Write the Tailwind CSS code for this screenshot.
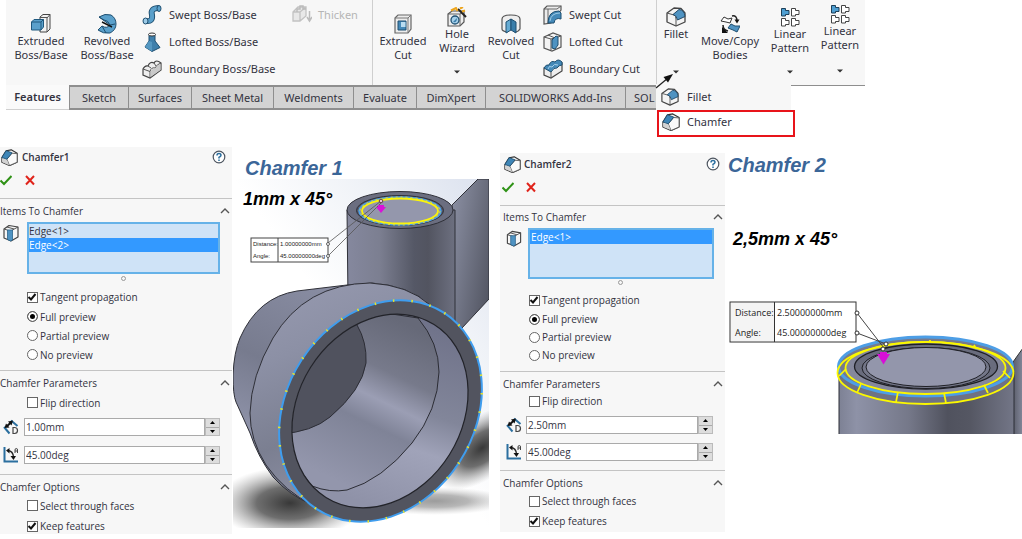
<!DOCTYPE html>
<html lang="en">
<head>
  <meta charset="UTF-8">
  <title>Chamfer feature</title>
  <script src="https://cdn.jsdelivr.net/npm/@tailwindcss/browser@4"></script>
</head>
<body class="bg-white min-h-screen overflow-x-hidden font-['Open_Sans','Noto_Sans',sans-serif] text-[#33333f]">

  <!-- Shared icons -->
  <svg class="hidden" aria-hidden="true">
    <symbol id="i-chamfer" viewBox="0 0 20 20">
      <path d="M1 10 6 2 12 1 19 5V15.500L10 19.500 1 15.500Z" fill="#f4f4f4" stroke="#333" stroke-width="1.300" stroke-linejoin="round"/>
      <path d="M7 12 13 5 19 5.500V15.500L10 19.500Z" fill="#fafafa" stroke="#555" stroke-linejoin="round"/>
      <path d="M1 11 7 12.500 9.500 19 1.500 15.500Z" fill="#d2d2d2"/>
      <path d="M1 10 6 2 13 4.500 7 12Z" fill="#3f86b7" stroke="#1f4f70" stroke-linejoin="round"/>
    </symbol>
    <symbol id="i-fillet" viewBox="0 0 20 20">
      <path d="M1 6 8 1 15 1.500 19 6V15L10 19 1 15Z" fill="#f4f4f4" stroke="#444" stroke-width="1.300" stroke-linejoin="round"/>
      <path d="M1 6 8 8Q10 9 10 12V19" fill="none" stroke="#555"/>
      <path d="M7 7.500 13 2.500Q18.500 3 19 9.500L11.500 13Q11 8.500 7 7.500Z" fill="#4f93c2" stroke="#234a68" stroke-linejoin="round"/>
    </symbol>
    <symbol id="i-edge" viewBox="0 0 16 18">
      <path d="M1 5 6 1.500 15 3V13L8 17 1 14Z" fill="#f6f6f6" stroke="#444" stroke-width="1.200" stroke-linejoin="round"/>
      <path d="M1 5 7.500 7 15 3M4 3l7 2" fill="none" stroke="#555"/>
      <path d="M4.500 6 9.500 6V16L7.500 17 4.500 15.500Z" fill="#4f93c2" stroke="#2a648d" stroke-width=".8"/>
    </symbol>
    <symbol id="i-distance" viewBox="0 0 16 16">
      <path d="M1 8 6.500 14.500M8 1.500l6.500 5.500" stroke="#2b6f9f" stroke-width="2" fill="none"/>
      <path d="M3.500 7.500 8 3.500" stroke="#111" stroke-width="2"/>
      <path d="M1.500 9 3 4.500 6.500 8.500ZM10 1.500 8.500 6.500 5 2.500Z" fill="#111"/>
      <path d="M10 8.500h1.500q3 0 3 3t-3 3H10Z" fill="none" stroke="#444" stroke-width="1.200"/>
    </symbol>
    <symbol id="i-angle" viewBox="0 0 16 16">
      <path d="M1.500 0V14.500H15" stroke="#2b6f9f" stroke-width="2" fill="none"/>
      <path d="M5 3.500Q10 4 10.500 10" stroke="#222" stroke-width="1.300" fill="none"/>
      <path d="M3 3.500 6.500 1V6.500ZM10.500 13 7.500 9H13Z" fill="#111"/>
      <path d="M12 6V3q0-1.500 1.300-1.500T14.500 3v3M12 4h2.500" stroke="#444" fill="none"/>
    </symbol>
    <symbol id="i-help" viewBox="0 0 14 14">
      <circle cx="7" cy="7" r="5.800" fill="#fff" stroke="#4d5560" stroke-width="1.200"/>
      <path d="M5 5.500Q5 3.500 7 3.500T9 5.300Q9 6.300 7 7.300V8.500M7 9.500V11" fill="none" stroke="#2b6f9f" stroke-width="1.500"/>
    </symbol>
    <symbol id="i-ok" viewBox="0 0 12 12"><path d="M.5 6.500 4 10 11.500 2" fill="none" stroke="#2f9216" stroke-width="2"/></symbol>
    <symbol id="i-cancel" viewBox="0 0 12 12"><path d="M2 2l8 8.500M10 2 2 10.500" fill="none" stroke="#e0241b" stroke-width="2"/></symbol>
    <symbol id="i-up" viewBox="0 0 10 6"><path d="M1 5 5 1 9 5" fill="none" stroke="#555" stroke-width="1.400"/></symbol>
    <symbol id="i-check" viewBox="0 0 10 10"><path d="M1.500 5 4 7.500 8.500 2" fill="none" stroke="#111" stroke-width="2"/></symbol>
    <symbol id="i-pattern" viewBox="0 0 20 20">
      <path d="M1.500 1.500H5.500V3.500H9V7.500H5.500V9H1.500Z" fill="#4f9fd2" stroke="#1c3f58"/>
      <path d="M11.500 1.500h4v2h3.500V7.500H15.500V9H11.500ZM1.500 11.500h4v2H9V17.500H5.500V19h-4ZM11.500 11.500h4v2h3.500V17.500H15.500V19H11.500Z" fill="#fff" stroke="#444"/>
    </symbol>
  </svg>

  <!-- Command ribbon -->
  <header class="relative mx-[6px] h-[109px] max-w-[859px] font-['Noto_Sans',sans-serif] text-[11px] leading-[14px]">
    <div class="flex h-[85px] bg-[#f7f7f7]">
      <div class="flex pl-[2px] shrink-0">
        <button class="flex w-[66px] flex-col items-center pt-[14px]">
          <svg class="size-5" viewBox="0 0 20 20"><path d="M9 3 12 .5H19V15L16 18H9Z" fill="#f2f2f2" stroke="#444"/><path d="M16 4 19 .5M9 3.500H16V18" fill="none" stroke="#555"/><path d="M.5 8 3 5.500H12.500V13L10 16H.5Z" fill="#5aa0cb" stroke="#1f587e"/><path d="M.5 8H10V16M10 8l2.500-2.500" fill="none" stroke="#1f587e"/></svg>
          Extruded<br>Boss/Base
        </button>
        <button class="flex w-[66px] flex-col items-center pt-[14px]">
          <svg class="size-5" viewBox="0 0 20 20"><path d="M2 3Q8-1 14 1q5 3 5 9t-6 9Q6 20 1 16L5 12q5 3 8-1Z" fill="#5aa0cb" stroke="#1f4f70"/><path d="M2 3 7 6q4 0 6 5l5-1M5 12l4 7" fill="none" stroke="#1f4f70"/><path d="M5 8 15 13" stroke="#111" stroke-width="1.500"/></svg>
          Revolved<br>Boss/Base
        </button>
        <div class="ml-[2px] flex w-[150px] flex-col pt-[1px]">
          <button class="flex h-[27px] items-center gap-[7px]">
            <svg class="size-5" viewBox="0 0 20 20"><path d="M4 16Q11 17 10 10 8 3 17 3" fill="none" stroke="#1f4f70" stroke-width="6"/><path d="M4 16Q11 17 10 10 8 3 17 3" fill="none" stroke="#5aa0cb" stroke-width="4"/><ellipse cx="3.500" cy="16" rx="2.500" ry="3" fill="#9ccae6" stroke="#1f4f70"/><ellipse cx="17" cy="3.500" rx="2" ry="3" fill="#5aa0cb" stroke="#1f4f70"/></svg>
            Swept Boss/Base
          </button>
          <button class="flex h-[27px] items-center gap-[7px]">
            <svg class="size-5" viewBox="0 0 20 20"><path d="M7 3V9L3 15 10 19.500 18 15.500 13 9V3Z" fill="#3f80ac" stroke="#1f4f70"/><path d="M10 10V19.500L3 15 7 9Z" fill="#5598c2"/><ellipse cx="10" cy="2.500" rx="3.500" ry="1.500" fill="#fff" stroke="#333"/></svg>
            Lofted Boss/Base
          </button>
          <button class="flex h-[27px] items-center gap-[7px]">
            <svg class="size-5" viewBox="0 0 20 20"><path d="M1 10Q3 6 6 7 8 2 12 4 14 0 19 4V11L8 19 1 16Z" fill="#eee" stroke="#444" stroke-width="1.200"/><path d="M1 10 8 12.500Q9 8 13 9 15 5 19 4M8 12.500V19M6 7l3 2M12 4l2 3" fill="none" stroke="#555"/><path d="M8.500 13Q10 9 13 9.500 15 6 18.500 5V11L8.500 18Z" fill="#c9c9c9"/></svg>
            Boundary Boss/Base
          </button>
        </div>
        <button class="mt-[1px] flex h-[27px] w-[80px] items-center gap-[6px] text-[#b5b5b5]" disabled>
          <svg class="size-5" viewBox="0 0 20 20"><path d="M1 7 6 2H14V11L8 16H1ZM1 7H8V16M8 7l6-5" fill="#e8e8e8" stroke="#c2c2c2" stroke-width="1.300"/><path d="M5 7V4H8V1H11V4h3M17.500 6v9M15 12l2.500 4 2.500-4" fill="none" stroke="#bcbcbc" stroke-width="1.500"/></svg>
          Thicken
        </button>
      </div>
      <div class="flex shrink-0 border-l border-[#cfcfcf] pl-[3px]">
        <button class="flex w-[54px] flex-col items-center pt-[14px]">
          <svg class="size-5" viewBox="0 0 20 20"><path d="M2 4 5 1H18V15L15 19H2Z" fill="#ececec" stroke="#666" stroke-width="1.200"/><path d="M2 4H15V19M15 4l3-3" fill="none" stroke="#777"/><path d="M5 7H13V16H5Z" fill="#4489b8" stroke="#1f4f70"/><path d="M8 8V13H12.500V8Z" fill="#b9dcf0"/></svg>
          Extruded<br>Cut
        </button>
        <button class="flex w-[54px] flex-col items-center pt-[7px]">
          <svg class="size-5" viewBox="0 0 20 20"><path d="M1 7 5 4H17V15L13 19H1Z" fill="#eee" stroke="#555" stroke-width="1.200"/><path d="M1 7H13V19M13 7l4-3" fill="none" stroke="#666"/><circle cx="8" cy="13" r="4" fill="#a6d0ea" stroke="#1f4f70" stroke-width="1.300"/><path d="M6 15q4 1 4-4Z" fill="#3a7eaa"/><path d="M11 2 19 10" stroke="#222" stroke-width="2"/><path d="M4 3.500 9 1l1.500 3M13 1.500l3-1.500M15 4.500l3-1" stroke="#eda51c" stroke-width="2" fill="none"/></svg>
          <span>Hole<br>Wizard</span>
          <svg class="mt-[15px] h-[4px] w-[6px]" viewBox="0 0 6 4"><path d="M0 .5H6L3 3.500Z" fill="#333"/></svg>
        </button>
        <button class="flex w-[54px] flex-col items-center pt-[14px]">
          <svg class="size-5" viewBox="0 0 20 20"><path d="M1 5Q1 1 10 1t9 4V15q-2 3-5 3V9L10 6 6 9v9Q1 17 1 15Z" fill="#eee" stroke="#555" stroke-width="1.200"/><path d="M5 8 10 5V16L5 19Z" fill="#65abd3" stroke="#1f4f70"/><path d="M10 5 15 8V19L10 16Z" fill="#3a7eaa" stroke="#1f4f70"/></svg>
          Revolved<br>Cut
        </button>
        <div class="ml-[5px] flex w-[113px] flex-col pt-[1px]">
          <button class="flex h-[27px] items-center gap-[6px]">
            <svg class="size-5" viewBox="0 0 20 20"><path d="M1 4 4 1H18V5L8 18 1 19Z" fill="#ececec" stroke="#555" stroke-width="1.200"/><path d="M1 4H14L18 1M5 4V18" fill="none" stroke="#666"/><path d="M5 18Q5 6 16 6L18 8V14Q12 12 11 18Z" fill="#4489b8" stroke="#1f4f70"/><path d="M7 16Q8 8 17 8" fill="none" stroke="#9ccae6"/></svg>
            Swept Cut
          </button>
          <button class="flex h-[27px] items-center gap-[6px]">
            <svg class="size-5" viewBox="0 0 20 20"><path d="M1 5 10 1 18 4V15L9 19 1 16Z" fill="#f3f3f3" stroke="#555" stroke-width="1.200"/><path d="M1 5 8 7V18M8 7 18 4M5 3l7 3" fill="none" stroke="#555"/><path d="M9 8 13 4 15 5V13L12 17 9 16Z" fill="#4f93c2" stroke="#1f4f70"/></svg>
            Lofted Cut
          </button>
          <button class="flex h-[27px] items-center gap-[6px]">
            <svg class="size-5" viewBox="0 0 20 20"><path d="M1 9 19 4V12L8 19 1 16Z" fill="#eee" stroke="#444" stroke-width="1.200"/><path d="M1 9Q3 5 6 6 8 1 12 3 15-1 19 3V6Q16 6 14 9 11 8 8 13Z" fill="#4489b8" stroke="#1f4f70"/><path d="M5 10Q6 6 9 8 11 4 15 6" fill="none" stroke="#a6d0ea"/><path d="M8 13v6" stroke="#555"/></svg>
            Boundary Cut
          </button>
        </div>
      </div>
      <div class="flex border-l border-[#cfcfcf]">
        <button class="flex w-[38px] flex-col items-center pt-[7px]">
          <svg class="size-5"><use href="#i-fillet"/></svg>
          Fillet
          <svg class="mt-[29px] h-[4px] w-[6px]" viewBox="0 0 6 4"><path d="M0 .5H6L3 3.500Z" fill="#333"/></svg>
        </button>
        <button class="flex w-[70px] flex-col items-center pt-[14px]">
          <svg class="size-5" viewBox="0 0 20 20"><path d="M1 7 4 3 8 5 12 4 10 9 6 8Z" fill="#fff" stroke="#333"/><path d="M8 14 11 10l4 2 5 0-3 6-4-2Z" fill="#4f93c2" stroke="#1f4f70"/><path d="M12 2Q17 1 17 7M3 11q0 5 5 6" stroke="#222" stroke-width="1.500" fill="none"/><path d="M14.500 5.500H19.500L17 9.500ZM2 13v6h6Z" fill="#111"/></svg>
          Move/Copy<br>Bodies
        </button>
        <button class="flex w-[50px] flex-col items-center pt-[7px]">
          <svg class="size-5"><use href="#i-pattern"/></svg>
          <span>Linear<br>Pattern</span>
          <svg class="mt-[15px] h-[4px] w-[6px]" viewBox="0 0 6 4"><path d="M0 .5H6L3 3.500Z" fill="#333"/></svg>
        </button>
        <button class="flex w-[50px] flex-col items-center pt-[4px]">
          <svg class="size-5"><use href="#i-pattern"/></svg>
          <span>Linear<br>Pattern</span>
          <svg class="mt-[17px] h-[4px] w-[6px]" viewBox="0 0 6 4"><path d="M0 .5H6L3 3.500Z" fill="#333"/></svg>
        </button>
      </div>
    </div>

    <nav class="flex h-[25px]">
      <a href="#" class="flex w-[63px] shrink-0 items-center justify-center bg-[#fafafa] border-b border-[#d0d0d0] font-semibold">Features</a>
      <div class="flex w-[588px] shrink-0 overflow-hidden border-y-2 border-l border-[#8e8e8e] bg-[#d3d3d3]">
        <a href="#" class="flex w-[59px] shrink-0 items-center justify-center border-r border-[#8e8e8e]">Sketch</a>
        <a href="#" class="flex w-[63px] shrink-0 items-center justify-center border-r border-[#8e8e8e]">Surfaces</a>
        <a href="#" class="flex w-[82px] shrink-0 items-center justify-center border-r border-[#8e8e8e]">Sheet Metal</a>
        <a href="#" class="flex w-[80px] shrink-0 items-center justify-center border-r border-[#8e8e8e]">Weldments</a>
        <a href="#" class="flex w-[63px] shrink-0 items-center justify-center border-r border-[#8e8e8e]">Evaluate</a>
        <a href="#" class="flex w-[69px] shrink-0 items-center justify-center border-r border-[#8e8e8e]">DimXpert</a>
        <a href="#" class="flex w-[140px] shrink-0 items-center justify-center border-r border-[#8e8e8e]">SOLIDWORKS Add-Ins</a>
        <span class="flex shrink-0 items-center pl-[8px]">SOL</span>
      </div>
      <div class="flex-1 border-t border-[#8e8e8e]"></div>
    </nav>

    <!-- Fillet flyout -->
    <div class="absolute left-[650px] top-[84px] w-[139px]">
      <button class="flex h-[26px] w-[135px] items-center gap-[8px] bg-[#f7f7f7] pl-[5px]">
        <svg class="size-[18px]"><use href="#i-fillet"/></svg>Fillet
      </button>
      <button class="ml-[1px] flex h-[27px] w-[138px] items-center gap-[7px] border-2 border-[#e8141a] bg-white pb-[3px] pl-[3px]">
        <svg class="size-[18px]"><use href="#i-chamfer"/></svg>Chamfer
      </button>
    </div>
    <svg class="absolute left-[649px] top-[72px] h-[17px] w-[20px]" viewBox="0 0 20 17"><path d="M1 16 13 6" stroke="#222" stroke-width="1.300"/><path d="M18 2 8.500 5 13 10.500Z" fill="#111"/></svg>
  </header>

  <main class="mt-[38px] grid grid-cols-[232fr_257fr_11fr_225fr_297fr] items-start text-[10px] leading-[14px]">

    <!-- Chamfer1 property manager -->
    <form class="bg-[#f7f7f7]">
      <div class="flex h-[20px] items-center pl-[1px] pr-[6px] text-[10px] font-semibold">
        <svg class="mr-[4px] size-[17px]"><use href="#i-chamfer"/></svg>Chamfer1
        <button type="button" class="ml-auto" aria-label="Help"><svg class="size-[14px]"><use href="#i-help"/></svg></button>
      </div>
      <div class="mb-[5px] flex h-[26px] items-center gap-[12px]">
        <button type="button" aria-label="OK"><svg class="size-[12px]"><use href="#i-ok"/></svg></button>
        <button type="button" aria-label="Cancel"><svg class="size-[12px]"><use href="#i-cancel"/></svg></button>
      </div>

      <section class="border-t border-[#c4c4c4] pb-[6px]">
        <h3 class="flex h-[23px] items-center justify-between pr-[2px] font-medium">Items To Chamfer <svg class="h-[6px] w-[10px]"><use href="#i-up"/></svg></h3>
        <div class="flex items-start pl-[3px] pr-[12px]">
          <svg class="mr-[8px] mt-[2px] h-[18px] w-[16px]"><use href="#i-edge"/></svg>
          <ul role="listbox" aria-label="Items To Chamfer" class="h-[52px] flex-1 border-2 border-[#66b2e8] bg-[#cfe3f7]">
            <li role="option" class="h-[14px]">Edge&lt;1&gt;</li>
            <li role="option" aria-selected="true" class="h-[14px] bg-[#3399ff] text-white">Edge&lt;2&gt;</li>
          </ul>
        </div>
        <div class="flex h-[13px] justify-center pl-[14px] pt-[2px]"><span class="size-[5px] rounded-full border border-[#999]"></span></div>
        <label class="relative ml-[27px] flex h-[20px] items-center gap-[2px]"><input type="checkbox" checked class="peer size-[11px] appearance-none border border-[#666] bg-white"><svg class="pointer-events-none absolute left-0 top-[5px] hidden size-[10px] peer-checked:block"><use href="#i-check"/></svg>Tangent propagation</label>
        <label class="ml-[27px] flex h-[19px] items-center gap-[2px]"><input type="radio" name="preview1" checked class="size-[11px] appearance-none rounded-full border border-[#666] bg-white checked:bg-black checked:shadow-[inset_0_0_0_2px_white]">Full preview</label>
        <label class="ml-[27px] flex h-[19px] items-center gap-[2px]"><input type="radio" name="preview1" class="size-[11px] appearance-none rounded-full border border-[#666] bg-white">Partial preview</label>
        <label class="ml-[27px] flex h-[19px] items-center gap-[2px]"><input type="radio" name="preview1" class="size-[11px] appearance-none rounded-full border border-[#666] bg-white">No preview</label>
      </section>

      <section class="border-t border-[#c4c4c4] pb-[10px]">
        <h3 class="flex h-[24px] items-center justify-between pr-[2px] font-medium">Chamfer Parameters <svg class="h-[6px] w-[10px]"><use href="#i-up"/></svg></h3>
        <label class="mb-[8px] ml-[27px] flex h-[15px] items-center gap-[2px]"><input type="checkbox" class="size-[11px] appearance-none border border-[#666] bg-white">Flip direction</label>
        <div class="mb-[10px] flex h-[18px] items-center pl-[3px] pr-[12px]">
          <svg class="mr-[5px] size-[16px]"><use href="#i-distance"/></svg>
          <input type="text" aria-label="Distance" value="1.00mm" class="h-[18px] min-w-0 flex-1 border border-[#aaa] bg-white px-[1px]">
          <span class="flex h-[18px] w-[15px] flex-col border border-[#bbb] bg-[#ddd]">
            <button type="button" aria-label="Increase" class="flex flex-1 items-center justify-center border-b border-[#aaa]"><svg class="h-[3px] w-[5px]" viewBox="0 0 5 3"><path d="M0 3 2.500 0 5 3Z"/></svg></button>
            <button type="button" aria-label="Decrease" class="flex flex-1 items-center justify-center"><svg class="h-[3px] w-[5px]" viewBox="0 0 5 3"><path d="M0 0H5L2.500 3Z"/></svg></button>
          </span>
        </div>
        <div class="flex h-[18px] items-center pl-[3px] pr-[12px]">
          <svg class="mr-[5px] size-[16px]"><use href="#i-angle"/></svg>
          <input type="text" aria-label="Angle" value="45.00deg" class="h-[18px] min-w-0 flex-1 border border-[#aaa] bg-white px-[1px]">
          <span class="flex h-[18px] w-[15px] flex-col border border-[#bbb] bg-[#ddd]">
            <button type="button" aria-label="Increase" class="flex flex-1 items-center justify-center border-b border-[#aaa]"><svg class="h-[3px] w-[5px]" viewBox="0 0 5 3"><path d="M0 3 2.500 0 5 3Z"/></svg></button>
            <button type="button" aria-label="Decrease" class="flex flex-1 items-center justify-center"><svg class="h-[3px] w-[5px]" viewBox="0 0 5 3"><path d="M0 0H5L2.500 3Z"/></svg></button>
          </span>
        </div>
      </section>

      <section class="border-t border-[#c4c4c4]">
        <h3 class="flex h-[24px] items-center justify-between pr-[2px] font-medium">Chamfer Options <svg class="h-[6px] w-[10px]"><use href="#i-up"/></svg></h3>
        <label class="mb-[6px] ml-[27px] flex h-[13px] items-center gap-[2px]"><input type="checkbox" class="size-[11px] appearance-none border border-[#666] bg-white">Select through faces</label>
        <label class="relative ml-[27px] flex h-[16px] items-center gap-[2px]"><input type="checkbox" checked class="peer size-[11px] appearance-none border border-[#666] bg-white"><svg class="pointer-events-none absolute left-0 top-[3px] hidden size-[10px] peer-checked:block"><use href="#i-check"/></svg>Keep features</label>
      </section>
    </form>

    <!-- Model view, 1 mm chamfer -->
    <figure class="relative pl-[1px]">
      <h2 class="h-[32px] pl-[12px] pt-[7px] font-['Liberation_Sans',sans-serif] text-[20px] font-bold italic leading-[28px] text-[#3b6698]">Chamfer 1</h2>
      <figcaption class="absolute left-[11px] top-[41px] font-['Liberation_Sans',sans-serif] text-[18px] font-bold italic leading-[22px] text-black">1mm x 45°</figcaption>
      <svg class="block w-full" viewBox="233 179 256 349">
        <defs>
          <linearGradient id="sky" x1="0" y1="1" x2="1" y2="0"><stop offset=".5" stop-color="#fff"/><stop offset=".75" stop-color="#eff2f7"/><stop offset="1" stop-color="#dbe1ee"/></linearGradient>
          <radialGradient id="shade"><stop offset="0" stop-color="#383838"/><stop offset=".45" stop-color="#555" stop-opacity=".85"/><stop offset="1" stop-color="#999" stop-opacity="0"/></radialGradient>
          <linearGradient id="tube"><stop offset="0" stop-color="#85889e"/><stop offset=".3" stop-color="#7c7f91"/><stop offset=".62" stop-color="#555866"/><stop offset=".75" stop-color="#525460"/><stop offset="1" stop-color="#6d7080"/></linearGradient>
          <linearGradient id="arm" x1="0" y1="0" x2="1" y2=".7"><stop offset="0" stop-color="#8d91a5"/><stop offset=".4" stop-color="#777b8c"/><stop offset="1" stop-color="#555865"/></linearGradient>
          <linearGradient id="band" x1="0" y1="0" x2=".35" y2="1"><stop offset="0" stop-color="#989bb1"/><stop offset=".35" stop-color="#8c90a5"/><stop offset=".7" stop-color="#7b7f91"/><stop offset="1" stop-color="#8d90a5"/></linearGradient>
          <linearGradient id="back" x1=".6" y1="0" x2=".2" y2="1"><stop offset="0" stop-color="#8b8fa5"/><stop offset=".45" stop-color="#777b8e"/><stop offset=".75" stop-color="#8e92a8"/><stop offset="1" stop-color="#656879"/></linearGradient>
          <linearGradient id="cone" gradientUnits="userSpaceOnUse" x1="410" y1="325" x2="335" y2="480"><stop offset="0" stop-color="#666978"/><stop offset=".3" stop-color="#777a8b"/><stop offset=".47" stop-color="#9b9eb4"/><stop offset=".62" stop-color="#7f8397"/><stop offset="1" stop-color="#9396ac"/></linearGradient>
          <linearGradient id="lip" gradientUnits="userSpaceOnUse" x1="430" y1="325" x2="370" y2="505"><stop offset="0" stop-color="#70738a"/><stop offset=".45" stop-color="#82869a"/><stop offset=".65" stop-color="#a0a3b9"/><stop offset="1" stop-color="#8f92a8"/></linearGradient>
          <clipPath id="bore"><ellipse cx="380" cy="411" rx="102" ry="82" transform="rotate(-58 380 411)"/></clipPath>
        </defs>
        <rect x="233" y="179" width="256" height="349" fill="url(#sky)"/>
        <ellipse cx="290" cy="503" rx="74" ry="36" fill="url(#shade)"/>
        <ellipse cx="482" cy="448" rx="56" ry="30" fill="url(#shade)" transform="rotate(-38 482 448)"/>
        <ellipse cx="435" cy="501" rx="75" ry="14" fill="url(#shade)" opacity=".5"/>
        <g stroke="#2f3038" stroke-width="1" stroke-linejoin="round">
          <path d="M452 205 478 179H489V299L462 328 452 335Z" fill="url(#arm)"/>
          <path d="M347 210 348 300 455 340V210Z" fill="url(#tube)"/>
          <ellipse cx="400" cy="210" rx="53" ry="18.500" fill="#6b6e80"/>
          <ellipse cx="400" cy="210.500" rx="43.500" ry="15" fill="#555867"/>
          <ellipse cx="400" cy="211" rx="41" ry="14" fill="#8f92a7" stroke="#4aa0ea" stroke-width="1.500"/>
        </g>
        <ellipse cx="400" cy="211" rx="38" ry="12.500" fill="#9497ac" stroke="#fbf50a" stroke-width="1.800"/>
        <ellipse cx="400" cy="211" rx="40" ry="14" fill="none" stroke="#e9e52a" stroke-width="1" stroke-dasharray="2 3"/>

        <path d="M313 505Q290 496 273 477 258 457 250 433L236 402Q233 395 233 375 234 352 240 338 258 297 297 291L347 285 372 283Q410 286 430 305Z" fill="url(#back)" stroke="#2f3038"/>
        <path d="M313 505Q285 492 266 465 250 440 250 413 251 376 273 338 305 284 370 283 408 285 430 305Z" fill="url(#band)" stroke="#2f3038"/>
        <ellipse cx="380.500" cy="411" rx="117" ry="94" transform="rotate(-57 380.500 411)" fill="#52545f" stroke="#3f9dee" stroke-width="2"/>
        <ellipse cx="380.500" cy="411" rx="117" ry="94" transform="rotate(-57 380.500 411)" fill="none" stroke="#e7e22b" stroke-width="2.500" stroke-dasharray="1.500 17"/>
        <g clip-path="url(#bore)" stroke="#2c2d35">
          <rect x="280" y="300" width="200" height="220" fill="url(#lip)" stroke="none"/>
          <path d="M418 318Q439 343 439 372 438 410 412 443 382 480 347 490 330 493 312 486L270 430 300 300Z" fill="url(#cone)"/>
          <path d="M357 325Q367 342 366 363 362 390 330 417 312 432 280 434V300H345Z" fill="#50525e"/>
        </g>
        <ellipse cx="380" cy="411" rx="102" ry="82" transform="rotate(-58 380 411)" fill="none" stroke="#222329" stroke-width="1.200"/>

        <g stroke="#555" fill="none" stroke-width=".8"><path d="M328 243 381 201M328 256 381 203"/></g>
        <path d="M378 205H384L384 207H386L381 213 376 207H378Z" fill="#d912d9"/>
        <circle cx="381" cy="201" r="1.800" fill="#e9c4d5" stroke="#644"/>
        <rect x="251" y="238" width="77" height="24" fill="#fff" stroke="#444"/>
        <path d="M278 238V262" stroke="#444"/>
        <g fill="#fff" stroke="#444" stroke-width=".8"><circle cx="328" cy="244" r="1.500"/><circle cx="328" cy="256" r="1.500"/></g>
        <g class="font-['Liberation_Sans',sans-serif] text-[6px]" fill="#222">
          <text x="253" y="246">Distance:</text><text x="280" y="246">1.00000000mm</text>
          <text x="253" y="258">Angle:</text><text x="280" y="258">45.00000000deg</text>
        </g>
      </svg>
    </figure>

    <div></div>

    <!-- Chamfer2 property manager -->
    <form class="mt-[6px] bg-[#f7f7f7]">
      <div class="flex h-[22px] items-center pl-[4px] pr-[5px] text-[10px] font-semibold">
        <svg class="mr-[3px] size-[17px]"><use href="#i-chamfer"/></svg>Chamfer2
        <button type="button" class="ml-auto" aria-label="Help"><svg class="size-[14px]"><use href="#i-help"/></svg></button>
      </div>
      <div class="mb-[6px] flex h-[24px] items-center gap-[11px] pl-[2px]">
        <button type="button" aria-label="OK"><svg class="size-[12px]"><use href="#i-ok"/></svg></button>
        <button type="button" aria-label="Cancel"><svg class="size-[12px]"><use href="#i-cancel"/></svg></button>
      </div>

      <section class="border-t border-[#c4c4c4] pb-[7px]">
        <h3 class="flex h-[22px] items-center justify-between pl-[3px] pr-[2px] font-medium">Items To Chamfer <svg class="h-[6px] w-[10px]"><use href="#i-up"/></svg></h3>
        <div class="flex items-start pl-[6px] pr-[11px]">
          <svg class="mr-[6px] mt-[2px] h-[17px] w-[16px]"><use href="#i-edge"/></svg>
          <ul role="listbox" aria-label="Items To Chamfer" class="h-[51px] flex-1 border-2 border-[#66b2e8] bg-[#cfe3f7]">
            <li role="option" aria-selected="true" class="h-[14px] bg-[#3399ff] pl-[1px] text-white">Edge&lt;1&gt;</li>
          </ul>
        </div>
        <div class="flex h-[11px] justify-center pl-[16px] pt-[1px]"><span class="size-[5px] rounded-full border border-[#999]"></span></div>
        <label class="relative ml-[29px] flex h-[20px] items-center gap-[2px]"><input type="checkbox" checked class="peer size-[11px] appearance-none border border-[#666] bg-white"><svg class="pointer-events-none absolute left-0 top-[5px] hidden size-[10px] peer-checked:block"><use href="#i-check"/></svg>Tangent propagation</label>
        <label class="ml-[29px] flex h-[18px] items-center gap-[2px]"><input type="radio" name="preview2" checked class="size-[11px] appearance-none rounded-full border border-[#666] bg-white checked:bg-black checked:shadow-[inset_0_0_0_2px_white]">Full preview</label>
        <label class="ml-[29px] flex h-[18px] items-center gap-[2px]"><input type="radio" name="preview2" class="size-[11px] appearance-none rounded-full border border-[#666] bg-white">Partial preview</label>
        <label class="ml-[29px] flex h-[18px] items-center gap-[2px]"><input type="radio" name="preview2" class="size-[11px] appearance-none rounded-full border border-[#666] bg-white">No preview</label>
      </section>

      <section class="border-t border-[#c4c4c4] pb-[9px]">
        <h3 class="flex h-[23px] items-center justify-between pl-[3px] pr-[2px] font-medium">Chamfer Parameters <svg class="h-[6px] w-[10px]"><use href="#i-up"/></svg></h3>
        <label class="mb-[9px] ml-[29px] flex h-[12px] items-center gap-[2px]"><input type="checkbox" class="size-[11px] appearance-none border border-[#666] bg-white">Flip direction</label>
        <div class="mb-[9px] flex h-[18px] items-center pl-[6px] pr-[12px]">
          <svg class="mr-[4px] size-[16px]"><use href="#i-distance"/></svg>
          <input type="text" aria-label="Distance" value="2.50mm" class="h-[18px] min-w-0 flex-1 border border-[#aaa] bg-white px-[1px]">
          <span class="flex h-[18px] w-[15px] flex-col border border-[#bbb] bg-[#ddd]">
            <button type="button" aria-label="Increase" class="flex flex-1 items-center justify-center border-b border-[#aaa]"><svg class="h-[3px] w-[5px]" viewBox="0 0 5 3"><path d="M0 3 2.500 0 5 3Z"/></svg></button>
            <button type="button" aria-label="Decrease" class="flex flex-1 items-center justify-center"><svg class="h-[3px] w-[5px]" viewBox="0 0 5 3"><path d="M0 0H5L2.500 3Z"/></svg></button>
          </span>
        </div>
        <div class="flex h-[18px] items-center pl-[6px] pr-[12px]">
          <svg class="mr-[4px] size-[16px]"><use href="#i-angle"/></svg>
          <input type="text" aria-label="Angle" value="45.00deg" class="h-[18px] min-w-0 flex-1 border border-[#aaa] bg-white px-[1px]">
          <span class="flex h-[18px] w-[15px] flex-col border border-[#bbb] bg-[#ddd]">
            <button type="button" aria-label="Increase" class="flex flex-1 items-center justify-center border-b border-[#aaa]"><svg class="h-[3px] w-[5px]" viewBox="0 0 5 3"><path d="M0 3 2.500 0 5 3Z"/></svg></button>
            <button type="button" aria-label="Decrease" class="flex flex-1 items-center justify-center"><svg class="h-[3px] w-[5px]" viewBox="0 0 5 3"><path d="M0 0H5L2.500 3Z"/></svg></button>
          </span>
        </div>
      </section>

      <section class="border-t border-[#c4c4c4] pb-[3px]">
        <h3 class="flex h-[24px] items-center justify-between pl-[3px] pr-[2px] font-medium">Chamfer Options <svg class="h-[6px] w-[10px]"><use href="#i-up"/></svg></h3>
        <label class="mb-[6px] ml-[29px] flex h-[12px] items-center gap-[2px]"><input type="checkbox" class="size-[11px] appearance-none border border-[#666] bg-white">Select through faces</label>
        <label class="relative ml-[29px] flex h-[16px] items-center gap-[2px]"><input type="checkbox" checked class="peer size-[11px] appearance-none border border-[#666] bg-white"><svg class="pointer-events-none absolute left-0 top-[3px] hidden size-[10px] peer-checked:block"><use href="#i-check"/></svg>Keep features</label>
      </section>
    </form>

    <!-- Model view, 2.5 mm chamfer -->
    <figure>
      <h2 class="pl-[3px] pt-[4px] font-['Liberation_Sans',sans-serif] text-[20px] font-bold italic leading-[28px] text-[#3b6698]">Chamfer 2</h2>
      <figcaption class="mb-[40px] mt-[49px] pl-[8px] font-['Liberation_Sans',sans-serif] text-[18px] font-bold italic leading-[22px] text-black">2,5mm x 45°</figcaption>
      <svg class="block w-full" viewBox="725 290 297 144">
        <defs>
          <linearGradient id="tube2"><stop offset="0" stop-color="#7d8194"/><stop offset=".1" stop-color="#8e92a7"/><stop offset=".4" stop-color="#757889"/><stop offset=".62" stop-color="#50525e"/><stop offset=".75" stop-color="#555763"/><stop offset="1" stop-color="#737687"/></linearGradient>
          <linearGradient id="arm2"><stop offset="0" stop-color="#5a5d6a"/><stop offset="1" stop-color="#85899c"/></linearGradient>
        </defs>
        <path d="M1013 362 1023 348V435H1013Z" fill="url(#arm2)" stroke="#333"/>
        <path d="M839 370V434H1014V370Z" fill="url(#tube2)"/>
        <path d="M839 372V434M1014 372V434" stroke="#2d2e36"/>
        <ellipse cx="925.500" cy="373" rx="88" ry="31" fill="#6f7283"/>
        <ellipse cx="925.500" cy="366.500" rx="87" ry="29.500" fill="#777a8c" stroke="#4d9ee6" stroke-width="3"/>
        <ellipse cx="925.500" cy="373" rx="88" ry="31" fill="none" stroke="#fbf700" stroke-width="1.800"/>
        <ellipse cx="925.500" cy="368" rx="80" ry="26" fill="#85889c" stroke="#fbf700" stroke-width="1.800"/>
        <path d="M861 384 857 393M898 392 896 402M944 393 946 403M984 385 988 393M1003 371 1010 378M846 369 839 376M930 340V343M974 345 976 349" stroke="#fbf700" stroke-width="1.700"/>
        <g stroke="#1f2026">
          <ellipse cx="926" cy="366.500" rx="71.500" ry="22.500" fill="#696c7d" stroke-width="1.300"/>
          <ellipse cx="926" cy="368" rx="64" ry="20.500" fill="#747789"/>
          <ellipse cx="926" cy="367" rx="60" ry="19.500" fill="#9396ab"/>
        </g>
        <path d="M857 313 884 348M857 333 886 344" stroke="#444" fill="none"/>
        <path d="M880 352H887V354H890L883.500 364.500 877 354H880Z" fill="#d70fd7"/>
        <g fill="#fff" stroke="#333"><circle cx="886" cy="344" r="2"/><circle cx="883" cy="349" r="2"/></g>
        <rect x="730" y="302" width="126" height="40" fill="#fff" stroke="#333"/>
        <path d="M731 303H774V341H731Z" fill="#f4f4f4"/>
        <path d="M774.500 302V342" stroke="#333"/>
        <g fill="#fff" stroke="#333"><circle cx="857" cy="313" r="2"/><circle cx="857" cy="333" r="2"/></g>
        <g class="text-[9px]" fill="#222">
          <text x="735" y="316">Distance:</text><text x="777" y="316">2.50000000mm</text>
          <text x="735" y="336">Angle:</text><text x="777" y="336">45.00000000deg</text>
        </g>
      </svg>
    </figure>
  </main>
</body>
</html>
